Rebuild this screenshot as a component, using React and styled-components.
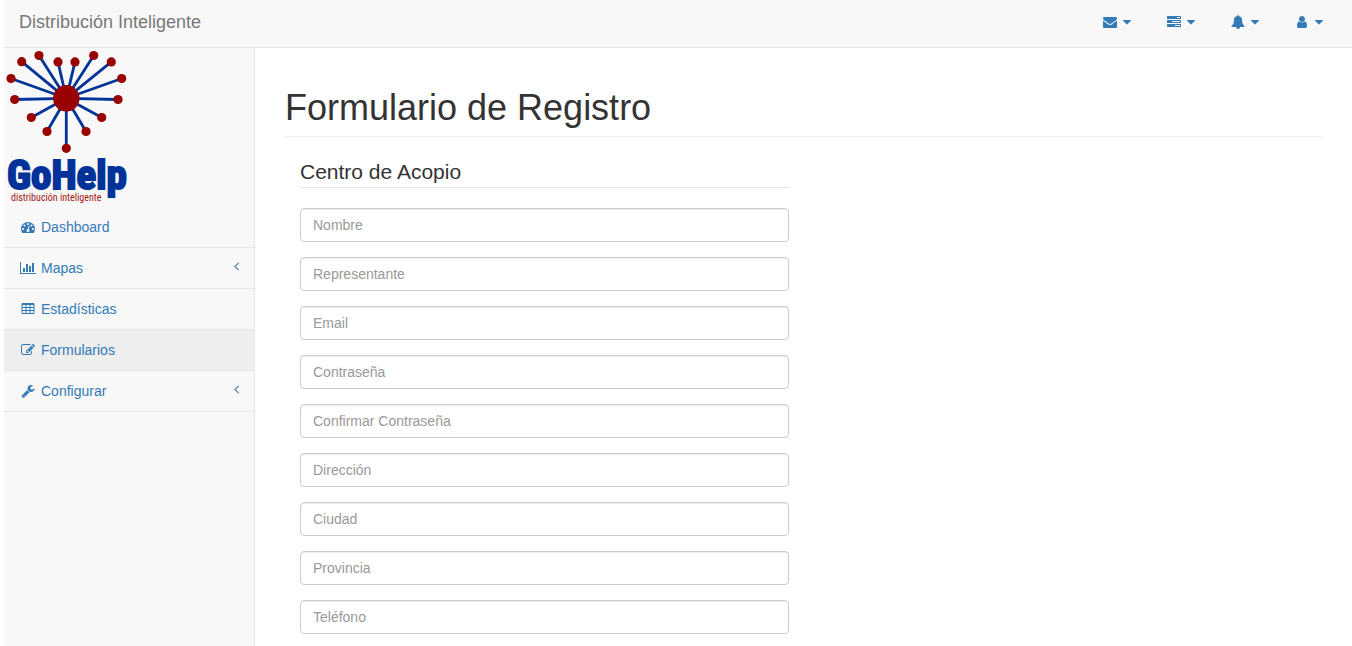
import React from "react";
import styled, { createGlobalStyle } from "styled-components";

const GlobalStyle = createGlobalStyle`
  *, *::before, *::after { box-sizing: border-box; }
  body {
    margin: 0;
    background: #fff;
    color: #333;
    font-family: "Liberation Sans", Arial, sans-serif;
    font-size: 14px;
    line-height: 20px;
  }
`;

const Page = styled.div`
  display: flex;
  flex-direction: column;
  min-height: 100vh;
  padding-left: 4px;
`;

const Header = styled.header`
  display: flex;
  justify-content: space-between;
  align-items: center;
  padding: 0 14px 3px 15px;
  background: #f8f8f8;
  border-bottom: 1px solid #e7e7e7;
`;

const Brand = styled.a`
  padding: 12px 0;
  color: #777;
  font-size: 18px;
  line-height: 20px;
  text-decoration: none;
`;

const TopLinks = styled.nav`
  display: flex;
  gap: 4px;
`;

const TopButton = styled.button`
  display: flex;
  align-items: center;
  gap: 4px;
  padding: 12px 15px;
  border: 0;
  background: transparent;
  color: #337ab7;
  cursor: pointer;
`;

const IconBox = styled.span`
  display: flex;
  flex: none;
  justify-content: center;
  width: ${(p) => p.$width}px;
  height: 14px;
`;

const IconSvg = styled.svg`
  flex: none;
  display: block;
  height: 14px;
  fill: currentColor;
`;

const Body = styled.div`
  display: flex;
  flex: 1;
`;

const Sidebar = styled.aside`
  flex: none;
  width: 251px;
  background: #f8f8f8;
  border-right: 1px solid #e7e7e7;
`;

const LogoSvg = styled.svg`
  display: block;
`;

const Wordmark = styled.text`
  fill: #039;
  stroke: #039;
  stroke-width: 2px;
  font-family: "Roboto Condensed", "Liberation Sans", sans-serif;
  font-size: 41px;
  font-weight: 700;
`;

const Tagline = styled.text`
  fill: #a31515;
  font-family: "Roboto Condensed", "Liberation Sans", sans-serif;
  font-size: 10px;
`;

const Menu = styled.ul`
  margin: 0;
  padding: 0;
  list-style: none;
`;

const MenuItem = styled.li`
  border-bottom: 1px solid #e7e7e7;
`;

const MenuLink = styled.a`
  display: flex;
  align-items: center;
  gap: 4px;
  padding: 10px 15px;
  background: ${(p) => (p.$active ? "#eee" : "transparent")};
  color: #337ab7;
  text-decoration: none;
`;

const MenuArrow = styled.span`
  display: flex;
  margin-left: auto;
  padding-bottom: 5px;
`;

const Main = styled.main`
  flex: 1;
  min-width: 0;
  padding: 40px 30px 12px;
`;

const Title = styled.h1`
  margin: 0 0 20px;
  padding-bottom: 8px;
  border-bottom: 1px solid #eee;
  font-size: 36px;
  font-weight: 400;
  line-height: 40px;
`;

const Form = styled.form`
  width: 50%;
  padding: 0 15px;
`;

const Fields = styled.fieldset`
  display: flex;
  flex-direction: column;
  gap: 15px;
  min-width: 0;
  margin: 0;
  padding: 0;
  border: 0;
`;

const Legend = styled.legend`
  width: 100%;
  margin-bottom: 20px;
  padding: 0;
  border-bottom: 1px solid #e5e5e5;
  font-size: 21px;
  line-height: 30px;
`;

const Input = styled.input`
  display: block;
  width: 100%;
  height: 34px;
  padding: 6px 12px;
  border: 1px solid #ccc;
  border-radius: 4px;
  background: #fff;
  box-shadow: inset 0 1px 1px rgba(0, 0, 0, 0.075);
  color: #555;
  font: inherit;

  &::placeholder { color: #999; opacity: 1; }
`;

const ICONS = {
  envelope: { w: 1792, d: "M1792 710v794q0 66-47 113t-113 47h-1472q-66 0-113-47t-47-113v-794q44 49 101 87 362 246 497 345 57 42 92.5 65.5t94.5 48 110 24.5h2q51 0 110-24.5t94.5-48 92.5-65.5q170-123 498-345 57-39 100-87zm0-294q0 79-49 151t-122 123q-376 261-468 325-10 7-42.5 31t-54 38.5-52 32.5-57.5 27-50 9h-2q-23 0-50-9t-57.5-27-52-32.5-54-38.5-42.5-31q-91-64-262-182.5t-205-142.5q-62-42-117-115.5t-55-136.5q0-78 41.5-130t118.5-52h1472q65 0 112.5 47t47.5 113z" },
  tasks: { w: 1792, d: "M1024 1408h640v-128h-640v128zm-384-512h1024v-128h-1024v128zm640-512h384v-128h-384v128zm512 832v256q0 26-19 45t-45 19h-1664q-26 0-45-19t-19-45v-256q0-26 19-45t45-19h1664q26 0 45 19t19 45zm0-512v256q0 26-19 45t-45 19h-1664q-26 0-45-19t-19-45v-256q0-26 19-45t45-19h1664q26 0 45 19t19 45zm0-512v256q0 26-19 45t-45 19h-1664q-26 0-45-19t-19-45v-256q0-26 19-45t45-19h1664q26 0 45 19t19 45z" },
  bell: { w: 1792, d: "M912 1696q0-16-16-16-59 0-101.5-42.5t-42.5-101.5q0-16-16-16t-16 16q0 73 51.5 124.5t124.5 51.5q16 0 16-16zm816-288q0 52-38 90t-90 38h-448q0 106-75 181t-181 75-181-75-75-181h-448q-52 0-90-38t-38-90q50-42 91-88t85-119.5 74.5-158.5 50-206 19.5-260q0-152 117-282.5t307-158.5q-8-19-8-39 0-40 28-68t68-28 68 28 28 68q0 20-8 39 190 28 307 158.5t117 282.5q0 139 19.5 260t50 206 74.5 158.5 85 119.5 91 88z" },
  user: { w: 1792, d: "M1536 1399q0 109-62.5 187t-150.5 78h-854q-88 0-150.5-78t-62.5-187q0-85 8.5-160.5t31.5-152 58.5-131 94-89 134.5-34.5q131 128 313 128t313-128q76 0 134.5 34.5t94 89 58.5 131 31.5 152 8.5 160.5zm-256-887q0 159-112.5 271.5t-271.5 112.5-271.5-112.5-112.5-271.5 112.5-271.5 271.5-112.5 271.5 112.5 112.5 271.5z" },
  caret: { w: 1024, d: "M1024 704q0 26-19 45l-448 448q-19 19-45 19t-45-19l-448-448q-19-19-19-45t19-45 45-19h896q26 0 45 19t19 45z" },
  dashboard: { w: 1792, d: "M384 1152q0-53-37.5-90.5t-90.5-37.5-90.5 37.5-37.5 90.5 37.5 90.5 90.5 37.5 90.5-37.5 37.5-90.5zm192-448q0-53-37.5-90.5t-90.5-37.5-90.5 37.5-37.5 90.5 37.5 90.5 90.5 37.5 90.5-37.5 37.5-90.5zm428 481l101-382q6-26-7.5-48.5t-38.5-29.5-48 6.5-30 39.5l-101 382q-60 5-107 43.5t-63 98.5q-20 77 20 146t117 89 146-20 89-117q16-60-6-117t-72-91zm660-33q0-53-37.5-90.5t-90.5-37.5-90.5 37.5-37.5 90.5 37.5 90.5 90.5 37.5 90.5-37.5 37.5-90.5zm-640-640q0-53-37.5-90.5t-90.5-37.5-90.5 37.5-37.5 90.5 37.5 90.5 90.5 37.5 90.5-37.5 37.5-90.5zm448 192q0-53-37.5-90.5t-90.5-37.5-90.5 37.5-37.5 90.5 37.5 90.5 90.5 37.5 90.5-37.5 37.5-90.5zm320 448q0 261-141 483-19 29-54 29h-1402q-35 0-54-29-141-221-141-483 0-182 71-348t191-286 286-191 348-71 348 71 286 191 191 286 71 348z" },
  chart: { w: 2048, d: "M640 896v512h-256v-512h256zm384-512v1024h-256v-1024h256zm1024 1152v128h-2048v-1536h128v1408h1920zm-640-896v768h-256v-768h256zm384-384v1152h-256v-1152h256z" },
  table: { w: 1792, d: "M224 128H1568Q1634 128 1681 175T1728 288V1376Q1728 1442 1681 1489T1568 1536H224Q158 1536 111 1489T64 1376V288Q64 222 111 175T224 128ZM192 416V608Q192 640 224 640H544Q576 640 576 608V416Q576 384 544 384H224Q192 384 192 416ZM704 416V608Q704 640 736 640H1056Q1088 640 1088 608V416Q1088 384 1056 384H736Q704 384 704 416ZM1216 416V608Q1216 640 1248 640H1568Q1600 640 1600 608V416Q1600 384 1568 384H1248Q1216 384 1216 416ZM192 800V992Q192 1024 224 1024H544Q576 1024 576 992V800Q576 768 544 768H224Q192 768 192 800ZM704 800V992Q704 1024 736 1024H1056Q1088 1024 1088 992V800Q1088 768 1056 768H736Q704 768 704 800ZM1216 800V992Q1216 1024 1248 1024H1568Q1600 1024 1600 992V800Q1600 768 1568 768H1248Q1216 768 1216 800ZM192 1184V1376Q192 1408 224 1408H544Q576 1408 576 1376V1184Q576 1152 544 1152H224Q192 1152 192 1184ZM704 1184V1376Q704 1408 736 1408H1056Q1088 1408 1088 1376V1184Q1088 1152 1056 1152H736Q704 1152 704 1184ZM1216 1184V1376Q1216 1408 1248 1408H1568Q1600 1408 1600 1376V1184Q1600 1152 1568 1152H1248Q1216 1152 1216 1184Z" },
  edit: { w: 1792, d: "M888 1184l116-116-152-152-116 116v56h96v96h56zm440-720q-16-16-33 1l-350 350q-17 17-1 33t33-1l350-350q17-17 1-33zm80 594v190q0 119-84.5 203.5t-203.5 84.5h-832q-119 0-203.5-84.5t-84.5-203.5v-832q0-119 84.5-203.5t203.5-84.5h832q63 0 117 25 15 7 18 23 3 17-9 29l-49 49q-14 14-32 8-23-6-45-6h-832q-66 0-113 47t-47 113v832q0 66 47 113t113 47h832q66 0 113-47t47-113v-126q0-13 9-22l64-64q15-15 35-7t20 29zm-96-738l288 288-672 672h-288v-288zm444 132l-92 92-288-288 92-92q28-28 68-28t68 28l152 152q28 28 28 68t-28 68z" },
  wrench: { w: 1792, d: "M448 1472q0-26-19-45t-45-19-45 19-19 45 19 45 45 19 45-19 19-45zm644-420l-682 682q-37 37-90 37-52 0-91-37l-106-108q-38-36-38-90 0-53 38-91l681-681q39 98 114.5 173.5t173.5 114.5zm634-435q0 39-23 106-47 134-164.5 217.5t-258.5 83.5q-185 0-316.5-131.5t-131.5-316.5 131.5-316.5 316.5-131.5q58 0 121.5 16.5t107.5 46.5q16 11 16 28t-16 28l-293 169v224l193 107q5-3 79-48.5t135.5-81 70.5-35.5q15 0 23.5 10t8.5 25z" },
  angleLeft: { w: 640, d: "M627 544q0 13-10 23l-393 393 393 393q10 10 10 23t-10 23l-50 50q-10 10-23 10t-23-10l-466-466q-10-10-10-23t10-23l466-466q10-10 23-10t23 10l50 50q10 10 10 23z" },
};

function Icon({ name }) {
  const { w, d } = ICONS[name];
  return (
    <IconSvg viewBox={`0 0 ${w} 1792`} width={w / 128} height="14" aria-hidden="true">
      <path fillRule="evenodd" d={d} />
    </IconSvg>
  );
}

const HUB = [62.3, 50.3];
const NODES = [
  [17.7, 13.7], [35, 7.5], [54, 13.9], [71, 13.9], [89.7, 7.5], [107.3, 13.9],
  [7, 30.5], [117.7, 30.5], [10.7, 51.5], [114, 51.5], [27.3, 69.5],
  [97.7, 69.5], [43, 83.5], [82, 83.5], [62.3, 100.3],
];

function Logo() {
  return (
    <LogoSvg width="130" height="159" viewBox="0 0 130 159" role="img" aria-label="GoHelp distribución inteligente">
      <g stroke="#039" strokeWidth="2.8">
        {NODES.map(([x, y]) => (
          <line key={`${x}-${y}`} x1={HUB[0]} y1={HUB[1]} x2={x} y2={y} />
        ))}
      </g>
      <g fill="#900">
        <circle cx={HUB[0]} cy={HUB[1]} r="13.2" />
        {NODES.map(([x, y]) => (
          <circle key={`${x}-${y}`} cx={x} cy={y} r="4.6" />
        ))}
      </g>
      <Wordmark x="3" y="141">GoHelp</Wordmark>
      <Tagline x="7" y="153">distribución inteligente</Tagline>
    </LogoSvg>
  );
}

const TOP_LINKS = [
  { icon: "envelope", label: "Mensajes" },
  { icon: "tasks", label: "Tareas" },
  { icon: "bell", label: "Alertas" },
  { icon: "user", label: "Usuario" },
];

const MENU = [
  { icon: "dashboard", label: "Dashboard" },
  { icon: "chart", label: "Mapas", nested: true },
  { icon: "table", label: "Estadísticas" },
  { icon: "edit", label: "Formularios", active: true },
  { icon: "wrench", label: "Configurar", nested: true },
];

const FIELDS = [
  { name: "nombre", label: "Nombre" },
  { name: "representante", label: "Representante" },
  { name: "email", label: "Email", type: "email" },
  { name: "contrasena", label: "Contraseña", type: "password" },
  { name: "confirmar", label: "Confirmar Contraseña", type: "password" },
  { name: "direccion", label: "Dirección" },
  { name: "ciudad", label: "Ciudad" },
  { name: "provincia", label: "Provincia" },
  { name: "telefono", label: "Teléfono", type: "tel" },
];

export default function App() {
  return (
    <Page>
      <GlobalStyle />
      <Header>
        <Brand href="#">Distribución Inteligente</Brand>
        <TopLinks>
          {TOP_LINKS.map(({ icon, label }) => (
            <TopButton key={icon} type="button" aria-label={label}>
              <IconBox $width={18}><Icon name={icon} /></IconBox>
              <IconBox $width={8}><Icon name="caret" /></IconBox>
            </TopButton>
          ))}
        </TopLinks>
      </Header>
      <Body>
        <Sidebar>
          <Logo />
          <Menu>
            {MENU.map(({ icon, label, active, nested }) => (
              <MenuItem key={label}>
                <MenuLink href="#" $active={active}>
                  <IconBox $width={18}><Icon name={icon} /></IconBox>
                  {label}
                  {nested && <MenuArrow><Icon name="angleLeft" /></MenuArrow>}
                </MenuLink>
              </MenuItem>
            ))}
          </Menu>
        </Sidebar>
        <Main>
          <Title>Formulario de Registro</Title>
          <Form>
            <Fields>
              <Legend>Centro de Acopio</Legend>
              {FIELDS.map(({ name, label, type = "text" }) => (
                <Input key={name} name={name} type={type} placeholder={label} aria-label={label} />
              ))}
            </Fields>
          </Form>
        </Main>
      </Body>
    </Page>
  );
}
